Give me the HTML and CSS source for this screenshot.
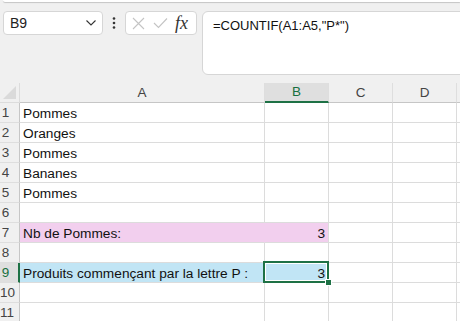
FILE: index.html
```html
<!DOCTYPE html>
<html lang="fr">
<head>
    <meta charset="UTF-8">
    <title>COUNTIF</title>
    <link rel="stylesheet" href="styles.css">
</head>
<body>
    <!-- Barre de formule -->
    <div class="top">
        <div class="ribbon-edge"></div>
        <div class="bar">
            <div class="name-box">
                <span>B9</span>
                <svg class="chevron" width="10" height="6" viewBox="0 0 10 6"><path d="M0.5 0.5 L5 5 L9.5 0.5" fill="none" stroke="#333" stroke-width="1.1"/></svg>
            </div>
            <div class="dots">
                <svg width="4" height="12" viewBox="0 0 4 12"><circle cx="2" cy="1.5" r="1.3" fill="#333"/><circle cx="2" cy="6" r="1.3" fill="#333"/><circle cx="2" cy="10.5" r="1.3" fill="#333"/></svg>
            </div>
            <div class="fx-box">
                <svg width="13" height="13" viewBox="0 0 13 13"><path d="M1 1 L12 12 M12 1 L1 12" stroke="#c4c4c4" stroke-width="1.1"/></svg>
                <svg width="15" height="12" viewBox="0 0 15 12"><path d="M1 6 L5.5 10.5 L14 1.5" fill="none" stroke="#c4c4c4" stroke-width="1.1"/></svg>
                <span class="fx">fx</span>
            </div>
            <div class="formula">=COUNTIF(A1:A5,"P*")</div>
        </div>
    </div>

    <!-- Feuille -->
    <div class="sheet">
        <div class="corner"></div>
        <div class="col-head">A</div>
        <div class="col-head active">B</div>
        <div class="col-head">C</div>
        <div class="col-head">D</div>
        <div class="col-head"></div>

        <div class="row-head">1</div><div class="cell">Pommes</div><div class="cell"></div><div class="cell"></div><div class="cell"></div><div class="cell"></div>
        <div class="row-head">2</div><div class="cell">Oranges</div><div class="cell"></div><div class="cell"></div><div class="cell"></div><div class="cell"></div>
        <div class="row-head">3</div><div class="cell">Pommes</div><div class="cell"></div><div class="cell"></div><div class="cell"></div><div class="cell"></div>
        <div class="row-head">4</div><div class="cell">Bananes</div><div class="cell"></div><div class="cell"></div><div class="cell"></div><div class="cell"></div>
        <div class="row-head">5</div><div class="cell">Pommes</div><div class="cell"></div><div class="cell"></div><div class="cell"></div><div class="cell"></div>
        <div class="row-head">6</div><div class="cell"></div><div class="cell"></div><div class="cell"></div><div class="cell"></div><div class="cell"></div>
        <div class="row-head">7</div><div class="cell pink joined">Nb de Pommes:</div><div class="cell pink num">3</div><div class="cell"></div><div class="cell"></div><div class="cell"></div>
        <div class="row-head">8</div><div class="cell"></div><div class="cell"></div><div class="cell"></div><div class="cell"></div><div class="cell"></div>
        <div class="row-head active">9</div><div class="cell blue joined">Produits commençant par la lettre P :</div><div class="cell blue num selected">3<span class="handle"></span></div><div class="cell"></div><div class="cell"></div><div class="cell"></div>
        <div class="row-head">10</div><div class="cell"></div><div class="cell"></div><div class="cell"></div><div class="cell"></div><div class="cell"></div>
        <div class="row-head">11</div><div class="cell"></div><div class="cell"></div><div class="cell"></div><div class="cell"></div><div class="cell"></div>
    </div>
</body>
</html>
```

FILE: styles.css
```css
body {
    margin: 0;
    font-family: 'Liberation Sans', Arial, sans-serif;
    background: #fff;
    color: #1a1a1a;
    overflow: hidden;
}

/* Barre du haut */
.top {
    height: 83px;
    background: #f0f0f0;
}

.ribbon-edge {
    height: 2px;
    margin-left: 3px;
    background: #fff;
    border-bottom-left-radius: 6px;
    box-shadow: 0 1px 1px rgba(0, 0, 0, 0.18);
}

.bar {
    display: flex;
    align-items: flex-start;
    padding: 9px 0 0 3px;
}

.name-box {
    box-sizing: border-box;
    width: 100px;
    height: 24px;
    background: #fff;
    border: 1px solid #d6d6d6;
    border-radius: 4px;
    display: flex;
    align-items: center;
    justify-content: space-between;
    padding: 0 6px 0 6px;
    font-size: 14px;
    color: #222;
}

.dots {
    width: 22px;
    height: 24px;
    display: flex;
    align-items: center;
    justify-content: center;
}

.fx-box {
    box-sizing: border-box;
    width: 72px;
    height: 24px;
    background: #fff;
    border: 1px solid #d6d6d6;
    border-radius: 4px;
    display: flex;
    align-items: center;
    gap: 8px;
    padding-left: 6px;
}

.fx {
    font-family: 'Liberation Serif', 'Times New Roman', serif;
    font-style: italic;
    font-size: 18px;
    color: #333;
    margin-left: -1px;
}

.formula {
    box-sizing: border-box;
    flex: 1;
    height: 64px;
    margin-left: 5px;
    margin-right: -8px;
    background: #fff;
    border: 1px solid #d6d6d6;
    border-radius: 6px;
    padding: 6px 0 0 10px;
    font-size: 13px;
    color: #111;
}

/* Feuille de calcul */
.sheet {
    display: grid;
    grid-template-columns: 20px 245px 64px 64px 64px 1fr;
    grid-template-rows: 20px;
    grid-auto-rows: 20px;
}

.sheet > div {
    box-sizing: border-box;
    border-right: 1px solid #dcdcdc;
    border-bottom: 1px solid #dcdcdc;
}

.corner {
    background: #f0f0f0;
    position: relative;
}

.corner::after {
    content: "";
    position: absolute;
    right: 3px;
    bottom: 3px;
    border-left: 13px solid transparent;
    border-bottom: 13px solid #dadada;
}

.sheet > .col-head {
    background: #f0f0f0;
    border-bottom-color: #c6c6c6;
    border-right-color: #dedede;
    text-align: center;
    font-size: 13.5px;
    line-height: 19px;
    color: #444;
}

.sheet > .col-head.active {
    background: #dfdfdf;
    color: #17703f;
    border-bottom: 2px solid #1e7145;
    line-height: 18px;
}

.sheet > .row-head {
    background: #f0f0f0;
    border-right-color: #c6c6c6;
    border-bottom-color: #dedede;
    font-size: 13.5px;
    line-height: 20px;
    padding-right: 8px;
    text-align: center;
    color: #444;
}

.sheet > .row-head.active {
    background: #dfdfdf;
    color: #17703f;
    border-right: 2px solid #1e7145;
    padding-right: 7px;
}

.cell {
    font-size: 13.7px;
    line-height: 18px;
    padding: 2px 3px 0 3px;
    white-space: nowrap;
    color: #111;
}

.num {
    text-align: right;
}

.sheet > .pink {
    background: #f2cfee;
}

.sheet > .blue {
    background: #c1e5f5;
}

.sheet > .pink.joined {
    border-right-color: #f2cfee;
}

.sheet > .blue.joined {
    border-right-color: #c1e5f5;
    overflow: visible;
}

.selected {
    position: relative;
}

.selected::before {
    content: "";
    position: absolute;
    left: -2px;
    top: -2px;
    right: -1px;
    bottom: -1px;
    border: 2px solid #1e7145;
    box-shadow: inset 0 0 0 1px #fff;
}

.handle {
    position: absolute;
    right: -4px;
    bottom: -4px;
    width: 5px;
    height: 5px;
    background: #1e7145;
    border: 1px solid #fff;
}
```
